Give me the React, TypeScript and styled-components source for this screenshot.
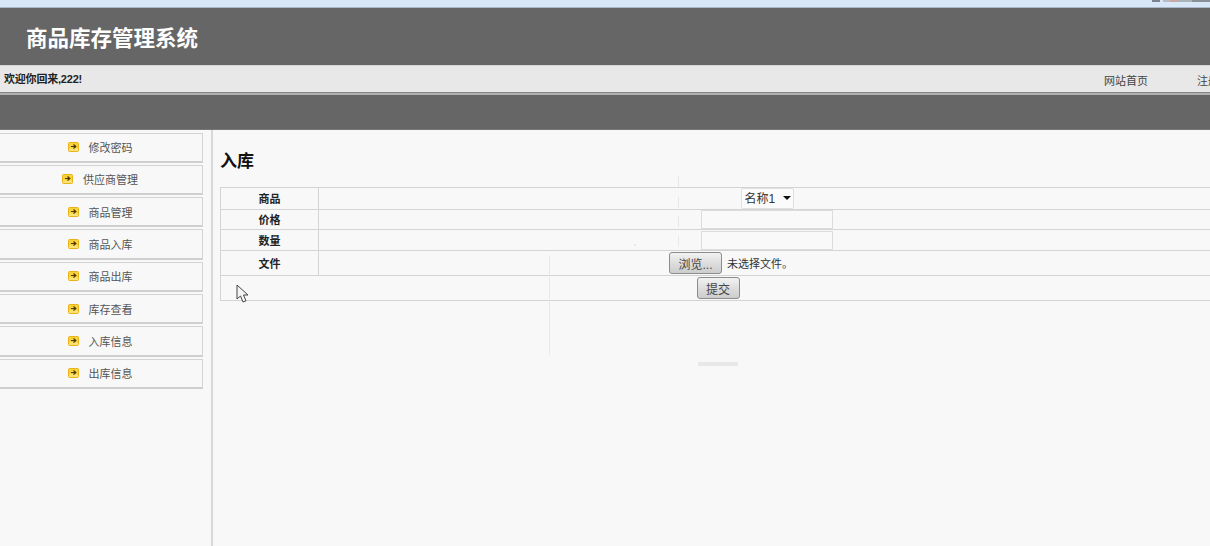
import React from "react";
import styled, { createGlobalStyle } from "styled-components";

const Global = createGlobalStyle`
  html, body { margin: 0; padding: 0; height: 100%; overflow: hidden; background: #f8f8f8; }
  body { font-family: "Liberation Sans", "Noto Sans CJK SC", sans-serif; font-size: 11px; color: #222; }
`;
const Page = styled.div`
  position: relative; width: 1210px; height: 546px; overflow: hidden;
  display: flex; flex-direction: column;
`;
const TopStrip = styled.div`
  height: 8px; flex: none; background: #d7e7f8; border-bottom: 1px solid #a9b9cb; box-sizing: border-box;
  display: flex; justify-content: flex-end; overflow: hidden;
`;
const StripMark = styled.div`
  width: 58px; height: 2px;
  background: linear-gradient(90deg, #7b8290 0 8px, transparent 8px 11px, #b9bcc0 11px 18px, #c8a8a0 18px 26px, #a8b4b8 26px 40px, #8a9098 40px 58px);
`;
const Header = styled.header`
  height: 57px; flex: none; background: #666; display: flex; align-items: center; padding-left: 26px; box-sizing: border-box;
`;
const Title = styled.h1`
  margin: 0; font-size: 21.5px; font-weight: 700; color: #fff; line-height: 1; padding-top: 7px;
`;
const WelcomeBar = styled.div`
  height: 28px; flex: none; box-sizing: border-box; background: #e8e8e8;
  border-top: 1px solid #d8d8d8; border-bottom: 1px solid #858585;
  display: flex; align-items: flex-start; justify-content: space-between; padding: 6px 0 0 4px; overflow: hidden;
`;
const Welcome = styled.span`
  font-weight: 700; font-size: 11px; line-height: 15px; color: #222; letter-spacing: -0.2px;
`;
const TopNav = styled.nav`
  display: flex; gap: 49px; width: 106px; flex: none; padding-top: 2px; white-space: nowrap; overflow: hidden;
`;
const TopLink = styled.a`
  font-size: 11px; line-height: 15px; color: #444;
`;
const Band = styled.div`
  height: 37px; flex: none; box-sizing: border-box; background: #666; border-top: 2px solid #b0b0b0; border-bottom: 1px solid #777;
`;
const Main = styled.div`
  flex: 1; display: flex; min-height: 0; background: #f8f8f8;
`;
const Side = styled.aside`
  width: 213px; flex: none; box-sizing: border-box; border-right: 2px solid #d8d8d8; padding-top: 2.5px;
  display: flex; flex-direction: column; gap: 2px;
`;
const MenuItem = styled.a`
  box-sizing: border-box; width: 206px; height: 30.3px; margin-left: -3px;
  border: 1px solid #d4d4d4; border-bottom: 2px solid #cfcfcf; display: flex; align-items: center; justify-content: center; gap: 10px;
  font-size: 11px; color: #555; background: #f8f8f8;
`;
const Content = styled.main`
  flex: 1; min-width: 0; padding: 21px 0 0 7px;
`;
const Heading = styled.h2`
  margin: 0 0 14px; font-size: 17px; line-height: 22px; font-weight: 700; color: #111;
`;
const FormTable = styled.table`
  border-collapse: collapse; width: 996px; table-layout: fixed; font-size: 11px;
  border: 1px solid #cfcfcf;
  td, th { border: 1px solid #d4d4d4; padding: 0; text-align: center; }
`;
const Row = styled.tr<{ $h: number }>`
  height: ${(p) => p.$h}px;
`;
const Label = styled.th<{ $lift: number }>`
  width: 97px; font-weight: 700; color: #222; font-size: 11px;
  && { padding-bottom: ${(p) => p.$lift}px; }
`;
const SelectWrap = styled.span`
  position: relative; display: inline-block; vertical-align: middle;
`;
const Select = styled.select`
  appearance: none; display: block; width: 53px; height: 21px; box-sizing: border-box; padding: 0 0 0 3px;
  border: 1px solid #e0e0e0; border-radius: 2px; background: #fbfbfb; font: 12px "Liberation Sans", "Noto Sans CJK SC", sans-serif; color: #333;
`;
const Caret = styled.span`
  position: absolute; right: 3px; top: 8px; width: 0; height: 0; pointer-events: none;
  border-left: 4px solid transparent; border-right: 4px solid transparent; border-top: 4px solid #111;
`;
const TextInput = styled.input`
  display: inline-block; vertical-align: middle; width: 132px; height: 19px; box-sizing: border-box; border: 1px solid #dcdcdc; background: #f9f9f9; padding: 0; margin: 0;
`;
const FileField = styled.span`
  display: inline-flex; align-items: center; gap: 5px; width: 196px; vertical-align: middle; color: #333; font-size: 11px;
`;
const Btn = styled.button<{ $w: number }>`
  width: ${(p) => p.$w}px; height: 22px; box-sizing: border-box; padding: 0; border: 1px solid #8c8c8c; border-radius: 3px;
  background: linear-gradient(#f2f2f2, #dcdcdc 55%, #cdcdcd); font: 12px "Liberation Sans", "Noto Sans CJK SC", sans-serif; color: #444; vertical-align: middle;
`;
const Cursor = styled.svg`
  position: absolute; left: 236px; top: 284px; width: 13px; height: 19px;
`;
const Ghost = styled.div<{ $x: number; $y: number; $w: number; $h: number }>`
  position: absolute; left: ${(p) => p.$x}px; top: ${(p) => p.$y}px; width: ${(p) => p.$w}px; height: ${(p) => p.$h}px; background: #e8e8e8;
`;

const ArrowIcon = () => (
  <svg width="11" height="10" viewBox="0 0 11 10" style={{ flex: "none" }}>
    <rect x="0.5" y="0.5" width="10" height="9" rx="1" fill="#f7d23a" stroke="#e8b418" />
    <rect x="1" y="6.5" width="9" height="2.5" fill="#fbe27a" />
    <path d="M3 4.5h4.5M5.5 2.5L7.8 4.5 5.5 6.5" fill="none" stroke="#4a3a05" strokeWidth="1.2" />
  </svg>
);

const menu = ["修改密码", "供应商管理", "商品管理", "商品入库", "商品出库", "库存查看", "入库信息", "出库信息"];

export default function App() {
  return (
    <Page>
      <Global />
      <TopStrip><StripMark /></TopStrip>
      <Header><Title>商品库存管理系统</Title></Header>
      <WelcomeBar>
        <Welcome>欢迎你回来,222!</Welcome>
        <TopNav><TopLink>网站首页</TopLink><TopLink>注册</TopLink></TopNav>
      </WelcomeBar>
      <Band />
      <Main>
        <Side>
          {menu.map((m) => (
            <MenuItem key={m}><ArrowIcon />{m}</MenuItem>
          ))}
        </Side>
        <Content>
          <Heading>入库</Heading>
          <FormTable>
            <tbody>
              <Row $h={22}>
                <Label $lift={2}>商品</Label>
                <td><SelectWrap><Select defaultValue="名称1"><option>名称1</option></Select><Caret /></SelectWrap></td>
              </Row>
              <Row $h={20}><Label $lift={2}>价格</Label><td><TextInput /></td></Row>
              <Row $h={21}><Label $lift={0}>数量</Label><td><TextInput /></td></Row>
              <Row $h={25}>
                <Label $lift={0}>文件</Label>
                <td><FileField><Btn $w={53} type="button">浏览...</Btn>未选择文件。</FileField></td>
              </Row>
              <Row $h={25}><td colSpan={2}><Btn $w={43} type="button">提交</Btn></td></Row>
            </tbody>
          </FormTable>
        </Content>
      </Main>
      <Ghost $x={678} $y={176} $w={1} $h={11} />
      <Ghost $x={678} $y={197} $w={1} $h={11} />
      <Ghost $x={678} $y={216} $w={1} $h={11} />
      <Ghost $x={678} $y={236} $w={1} $h={11} />
      <Ghost $x={634} $y={244} $w={2} $h={2} />
      <Ghost $x={549} $y={255} $w={1} $h={100} />
      <Ghost $x={698} $y={362} $w={40} $h={4} />
      <Cursor viewBox="0 0 13 19">
        <path d="M1 1v14l3.5-3 2.5 6 3-1.2-2.5-5.8H12z" fill="#f5f5f5" stroke="#444" strokeWidth="1" />
      </Cursor>
    </Page>
  );
}
